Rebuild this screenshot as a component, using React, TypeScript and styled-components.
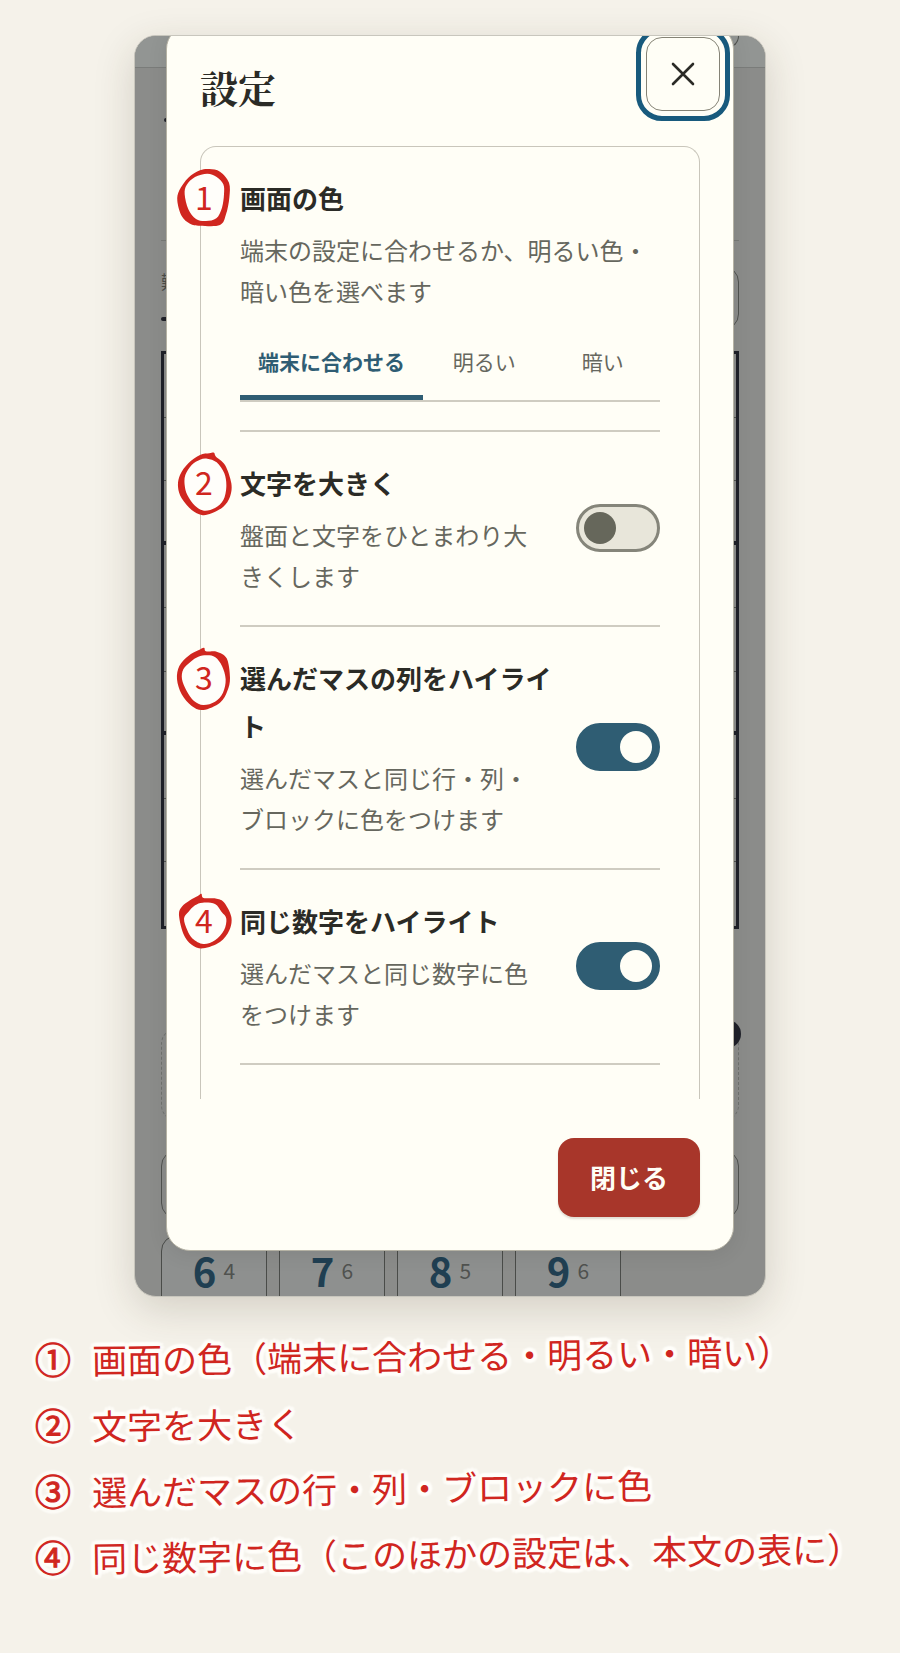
import React, { useState } from "react";
import styled, { createGlobalStyle } from "styled-components";

const sans = `"Noto Sans CJK JP", "Noto Sans", sans-serif`;
const serif = `"Noto Serif CJK JP", "Noto Serif JP", "Noto Sans CJK JP", serif`;

const c = {
  page: "#f5f2ea",
  paper: "#fffef6",
  ink: "#2b2b26",
  muted: "#66675e",
  line: "#c9c6bb",
  accent: "#2f5d73",
  red: "#a8362a",
  pen: "#d0261f",
};

const GlobalStyle = createGlobalStyle`
  *, *::before, *::after { box-sizing: border-box; }
  body { margin: 0; background: ${c.page}; color: ${c.ink}; font-family: ${sans}; }
  h1, h2, p, ol { margin: 0; padding: 0; }
  button { font: inherit; cursor: pointer; }
`;

const Page = styled.main`
  padding: 35px 0 65px;
  overflow: hidden;
`;

const Phone = styled.section`
  position: relative;
  width: calc(100% - 48px);
  max-width: 632px;
  margin: 0 auto 28px;
  padding: 0 31px 45px;
  border: 1px solid #c8c6bd;
  border-radius: 22px;
  background: #8b8c8a;
  box-shadow: 0 12px 40px rgba(60, 50, 30, 0.18);
  overflow: hidden;
`;

/* Dimmed game screen lying under the dialog */
const Game = styled.div`
  position: absolute;
  inset: 0;
  display: flex;
  flex-direction: column;
`;

const GameBar = styled.div`
  display: flex;
  justify-content: flex-end;
  flex: none;
  height: 32px;
  padding: 0 26px;
  border-bottom: 1px solid #7a7c7a;
  background: #929593;
`;

const BarButton = styled.div`
  width: 64px;
  height: 12px;
  border: 1px solid #50524f;
  border-top: 0;
  border-radius: 0 0 14px 14px;
`;

const GameBody = styled.div`
  display: flex;
  flex-direction: column;
  padding: 0 26px;
`;

const GameHead = styled.div`
  height: 173px;
  padding: 50px 3px 0;
  border-bottom: 1px solid #777976;
`;

const Speck = styled.div`
  width: 10px;
  height: 4px;
  border-radius: 2px;
  background: #1f2129;
`;

const Status = styled.div`
  display: flex;
  justify-content: space-between;
  height: 110px;
  padding-top: 25px;
`;

const Level = styled.div`
  display: flex;
  flex-direction: column;
  gap: 21px;
  color: #4a4c49;
  font-size: 18px;
  line-height: 30px;
`;

const StatusBox = styled.div`
  width: 120px;
  height: 64px;
  border: 1px solid #50524f;
  border-radius: 16px;
`;

const Board = styled.div`
  display: grid;
  grid-template-rows: repeat(9, 1fr);
  height: 578px;
  margin-bottom: 99px;
  border: 3px solid #1f2129;
`;

const BoardRow = styled.div<{ $heavy: boolean }>`
  border-bottom: ${(p) => (p.$heavy ? "4px solid #1f2129" : "1px solid #50524f")};
  &:last-child { border-bottom: 0; }
`;

const Hint = styled.div`
  position: relative;
  height: 93px;
  margin-bottom: 29px;
  border: 1px dashed #6f716e;
  border-radius: 16px;
`;

const HintDot = styled.div`
  position: absolute;
  top: -9px;
  right: -3px;
  width: 28px;
  height: 28px;
  border-radius: 50%;
  background: #1f2129;
`;

const Tools = styled.div`
  height: 69px;
  margin-bottom: 16px;
  border: 1px solid #50524f;
  border-radius: 16px;
`;

const Keys = styled.div`
  display: flex;
  gap: 12px;
`;

const Key = styled.button`
  display: flex;
  align-items: center;
  justify-content: center;
  gap: 7px;
  width: 106px;
  height: 70px;
  padding: 0;
  border: 1px solid #4a4c49;
  border-radius: 16px 16px 0 0;
  background: #8e908f;
  color: #50524f;
  font-size: 21px;
  line-height: 40px;
  strong { color: #203f52; font-size: 40px; }
`;

const Dialog = styled.div`
  position: relative;
  margin-top: -11px;
  border: 1px solid #b5b2a4;
  border-radius: 24px;
  background: ${c.paper};
  box-shadow: 0 4px 20px rgba(0, 0, 0, 0.08);
`;

const DialogHead = styled.header`
  display: flex;
  align-items: flex-start;
  justify-content: space-between;
  height: 120px;
  padding: 11px 13px 0 33px;
`;

const Title = styled.h1`
  padding-top: 22px;
  font-family: ${serif};
  font-size: 38px;
  font-weight: 700;
  line-height: 56px;
`;

const CloseIcon = styled.button`
  display: grid;
  place-items: center;
  width: 74px;
  height: 74px;
  padding: 0;
  border: 1px solid #858376;
  border-radius: 16px;
  outline: 5px solid #185a7d;
  outline-offset: 5px;
  background: ${c.paper};
  color: ${c.ink};
`;

const Settings = styled.div`
  margin: 0 33px;
  padding: 0 39px 34px;
  border: 1px solid ${c.line};
  border-bottom: 0;
  border-radius: 16px 16px 0 0;
`;

const Row = styled.section`
  position: relative;
  padding: 27px 0 28px;
  border-bottom: 2px solid #cfccc1;
`;

const SwitchRow = styled(Row)`
  display: flex;
  align-items: center;
  gap: 24px;
  padding-bottom: 29px;
`;

const Label = styled.label`
  display: block;
  flex: 1;
`;

const Name = styled.h2`
  margin-bottom: 7px;
  font-size: 26px;
  font-weight: 700;
  line-height: 48px;
`;

const Note = styled.p<{ $inset?: boolean }>`
  padding-right: ${(p) => (p.$inset ? 16 : 0)}px;
  color: ${c.muted};
  font-size: 24px;
  line-height: 41px;
`;

const Tabs = styled.div`
  display: flex;
  gap: 4px;
  margin-top: 18px;
  border-bottom: 2px solid #cfccc1;
`;

const Tab = styled.button<{ $on: boolean }>`
  flex: 1 1 0;
  height: 71px;
  padding: 0 18px 2px;
  border: 0;
  border-bottom: 5px solid ${(p) => (p.$on ? c.accent : "transparent")};
  background: none;
  color: ${(p) => (p.$on ? c.accent : c.muted)};
  font-size: 21px;
  font-weight: ${(p) => (p.$on ? 700 : 400)};
  white-space: nowrap;
`;

const Switch = styled.input`
  appearance: none;
  display: flex;
  align-items: center;
  flex: none;
  width: 84px;
  height: 48px;
  margin: 0;
  padding: 0 5px;
  border: 3px solid #85857a;
  border-radius: 24px;
  background: #e8e6da;
  cursor: pointer;
  &::before {
    content: "";
    width: 32px;
    height: 32px;
    border-radius: 50%;
    background: #66675b;
  }
  &:checked {
    justify-content: flex-end;
    border-color: ${c.accent};
    background: ${c.accent};
  }
  &:checked::before { background: ${c.paper}; }
`;

const DialogFoot = styled.footer`
  display: flex;
  justify-content: flex-end;
  padding: 39px 33px 33px;
`;

const CloseButton = styled.button`
  height: 79px;
  padding: 0 32px 2px;
  border: 0;
  border-radius: 16px;
  background: ${c.red};
  box-shadow: 0 2px 2px rgba(60, 50, 30, 0.16);
  color: #fffef6;
  font-size: 26px;
  font-weight: 700;
`;

const Mark = styled.span`
  position: absolute;
  top: 20px;
  left: -64px;
  display: grid;
  place-items: center;
  width: 56px;
  height: 64px;
  color: ${c.pen};
  font-size: 32px;
  line-height: 32px;
  svg, b { grid-area: 1 / 1; }
  b { padding-bottom: 7px; font-weight: 400; }
`;

const Legend = styled.ol`
  list-style: none;
  padding: 0 0 0 35px;
`;

const LegendItem = styled.li`
  display: flex;
  align-items: center;
  gap: 20px;
  height: 66px;
  color: ${c.pen};
  font-size: 35px;
  white-space: nowrap;
  text-shadow: 4px 0 2px #fffefa, -4px 0 2px #fffefa, 0 4px 2px #fffefa, 0 -4px 2px #fffefa,
    3px 3px 2px #fffefa, -3px -3px 2px #fffefa, 3px -3px 2px #fffefa, -3px 3px 2px #fffefa;
`;

const LegendNumber = styled.span`
  width: 37px;
  font-size: 36px;
  -webkit-text-stroke: 1px ${c.pen};
`;

const LegendText = styled.span`
  transform: rotate(-0.7deg);
  transform-origin: left center;
`;

type Point = [number, number];

/* Closed smooth curve through the given points */
function loop(points: Point[]) {
  const n = points.length;
  const at = (i: number) => points[(i + n) % n];
  let d = `M${points[0].join(" ")}`;
  for (let i = 0; i < n; i++) {
    const [p0, p1, p2, p3] = [at(i - 1), at(i), at(i + 1), at(i + 2)];
    const a = [p1[0] + (p2[0] - p0[0]) / 6, p1[1] + (p2[1] - p0[1]) / 6];
    const b = [p2[0] - (p3[0] - p1[0]) / 6, p2[1] - (p3[1] - p1[1]) / 6];
    d += `C${a.join(" ")} ${b.join(" ")} ${p2.join(" ")}`;
  }
  return d + "Z";
}

const rings: { outer: Point[]; inner: Point[] }[] = [
  {
    outer: [[100, 6], [132, 14], [159, 47], [160, 92], [150, 142], [132, 174], [72, 176], [42, 170], [17, 147], [4, 102], [10, 70], [37, 32], [72, 10]],
    inner: [[94, 20], [122, 30], [142, 52], [144, 82], [138, 122], [121, 154], [90, 162], [60, 156], [37, 127], [26, 82], [32, 54], [57, 30]],
  },
  {
    outer: [[114, 2], [120, 14], [147, 39], [166, 94], [162, 134], [142, 164], [107, 184], [77, 189], [47, 174], [17, 139], [6, 104], [12, 69], [37, 34], [72, 9], [100, 4]],
    inner: [[94, 20], [122, 31], [145, 64], [151, 104], [142, 144], [117, 168], [84, 176], [57, 161], [34, 129], [26, 99], [28, 69], [47, 39], [72, 23]],
  },
  {
    outer: [[84, 2], [90, 13], [122, 14], [152, 34], [162, 92], [154, 132], [132, 167], [82, 189], [47, 177], [17, 142], [3, 97], [10, 57], [37, 27], [67, 10]],
    inner: [[94, 25], [118, 31], [138, 57], [149, 97], [141, 137], [117, 164], [82, 174], [54, 162], [32, 132], [18, 97], [22, 67], [44, 44], [67, 29]],
  },
  {
    outer: [[76, 11], [83, 24], [122, 26], [145, 38], [166, 81], [160, 121], [132, 156], [82, 175], [47, 164], [22, 131], [9, 76], [17, 51], [42, 31], [64, 19]],
    inner: [[80, 38], [117, 42], [137, 66], [151, 86], [144, 121], [117, 151], [82, 162], [50, 146], [34, 121], [24, 86], [37, 66], [57, 46]],
  },
];

function RingMark({ n }: { n: number }) {
  const ring = rings[n - 1];
  return (
    <Mark>
      <svg width="56" height="64" viewBox="0 0 168 192" aria-hidden="true">
        <path d={loop(ring.outer)} fill={c.pen} />
        <path d={loop(ring.inner)} fill="#fffefa" />
      </svg>
      <b>{n}</b>
    </Mark>
  );
}

const themes = ["端末に合わせる", "明るい", "暗い"];

const switches = [
  { id: "large", name: "文字を大きく", note: "盤面と文字をひとまわり大きくします", on: false },
  { id: "lines", name: "選んだマスの列をハイライト", note: "選んだマスと同じ行・列・ブロックに色をつけます", on: true },
  { id: "same", name: "同じ数字をハイライト", note: "選んだマスと同じ数字に色をつけます", on: true },
];

const keys = [["6", "4"], ["7", "6"], ["8", "5"], ["9", "6"]];

const legend = [
  ["①", "画面の色（端末に合わせる・明るい・暗い）"],
  ["②", "文字を大きく"],
  ["③", "選んだマスの行・列・ブロックに色"],
  ["④", "同じ数字に色（このほかの設定は、本文の表に）"],
];

export default function App() {
  const [theme, setTheme] = useState(0);
  return (
    <>
      <GlobalStyle />
      <Page>
        <Phone>
          <Game>
            <GameBar><BarButton /></GameBar>
            <GameBody>
              <GameHead><Speck /></GameHead>
              <Status>
                <Level>難<Speck /></Level>
                <StatusBox />
              </Status>
              <Board>
                {Array.from({ length: 9 }, (_, i) => (
                  <BoardRow key={i} $heavy={i % 3 === 2} />
                ))}
              </Board>
              <Hint><HintDot /></Hint>
              <Tools />
              <Keys>
                {keys.map(([digit, left]) => (
                  <Key key={digit} type="button"><strong>{digit}</strong><span>{left}</span></Key>
                ))}
              </Keys>
            </GameBody>
          </Game>

          <Dialog role="dialog" aria-labelledby="dialog-title">
            <DialogHead>
              <Title id="dialog-title">設定</Title>
              <CloseIcon type="button" aria-label="閉じる">
                <svg width="24" height="24" viewBox="0 0 24 24" fill="none" stroke="currentColor" strokeWidth="2.6" strokeLinecap="round" aria-hidden="true">
                  <path d="M2 2L22 22M22 2L2 22" />
                </svg>
              </CloseIcon>
            </DialogHead>
            <Settings>
              <Row>
                <RingMark n={1} />
                <Name>画面の色</Name>
                <Note>端末の設定に合わせるか、明るい色・暗い色を選べます</Note>
                <Tabs role="tablist" aria-label="画面の色">
                  {themes.map((t, i) => (
                    <Tab key={t} type="button" role="tab" aria-selected={i === theme} $on={i === theme} onClick={() => setTheme(i)}>
                      {t}
                    </Tab>
                  ))}
                </Tabs>
              </Row>
              {switches.map((s, i) => (
                <SwitchRow key={s.id}>
                  <RingMark n={i + 2} />
                  <Label htmlFor={s.id}>
                    <Name>{s.name}</Name>
                    <Note $inset>{s.note}</Note>
                  </Label>
                  <Switch id={s.id} type="checkbox" role="switch" defaultChecked={s.on} />
                </SwitchRow>
              ))}
            </Settings>
            <DialogFoot>
              <CloseButton type="button">閉じる</CloseButton>
            </DialogFoot>
          </Dialog>
        </Phone>

        <Legend>
          {legend.map(([n, text]) => (
            <LegendItem key={n}>
              <LegendNumber>{n}</LegendNumber>
              <LegendText>{text}</LegendText>
            </LegendItem>
          ))}
        </Legend>
      </Page>
    </>
  );
}
